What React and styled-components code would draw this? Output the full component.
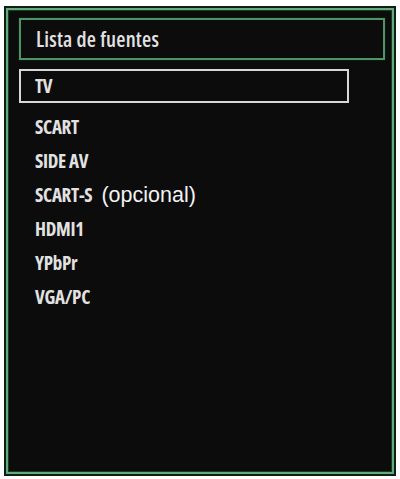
import React from 'react';
import styled, { createGlobalStyle } from 'styled-components';

const Global = createGlobalStyle`
  html, body {
    margin: 0;
    padding: 0;
    background: #ffffff;
  }
`;

const Frame = styled.div`
  box-sizing: border-box;
  margin: 6px 4px 0 4px;
  width: 392px;
  height: 470px;
  background: #0c0c0c;
  border: 2px solid #0f1f13;
  box-shadow: inset 0 0 0 2px #62ad7b, inset 0 0 0 3px #1b3a24;
  padding: 10px 9px 0 13px;
  font-family: "Open Sans", "DejaVu Sans", sans-serif;
  font-stretch: 75%;
  color: #e2e2e2;
`;

const Header = styled.div`
  box-sizing: border-box;
  height: 42px;
  border: 2px solid #4f9466;
  box-shadow: 0 0 1px #2c5a3a;
  display: flex;
  align-items: center;
  padding-left: 15px;
  font-size: 21px;
  font-weight: 600;
  letter-spacing: 0.2px;
`;

const List = styled.div`
  display: flex;
  flex-direction: column;
  margin-top: 9px;
`;

const Item = styled.div`
  box-sizing: border-box;
  display: flex;
  align-items: center;
  height: 34px;
  width: ${(p) => (p.selected ? '330px' : 'auto')};
  border: 2px solid ${(p) => (p.selected ? '#d8d8d8' : 'transparent')};
  padding-left: 14px;
  margin-bottom: ${(p) => (p.selected ? '7px' : '0')};
  font-size: 19px;
  font-weight: 700;
  letter-spacing: -0.3px;
`;

const Note = styled.span`
  font-family: "Liberation Sans", Arial, sans-serif;
  font-stretch: normal;
  font-weight: normal;
  font-size: 21.5px;
  letter-spacing: 0;
  margin-left: 9px;
  color: #f2f2f2;
`;

const sources = [
  { name: 'TV', selected: true },
  { name: 'SCART' },
  { name: 'SIDE AV' },
  { name: 'SCART-S', note: '(opcional)' },
  { name: 'HDMI1' },
  { name: 'YPbPr' },
  { name: 'VGA/PC' },
];

const App = () => (
  <>
    <Global />
    <Frame>
      <Header>Lista de fuentes</Header>
      <List>
        {sources.map((s) => (
          <Item key={s.name} selected={s.selected}>
            {s.name}
            {s.note && <Note>{s.note}</Note>}
          </Item>
        ))}
      </List>
    </Frame>
  </>
);

export default App;
